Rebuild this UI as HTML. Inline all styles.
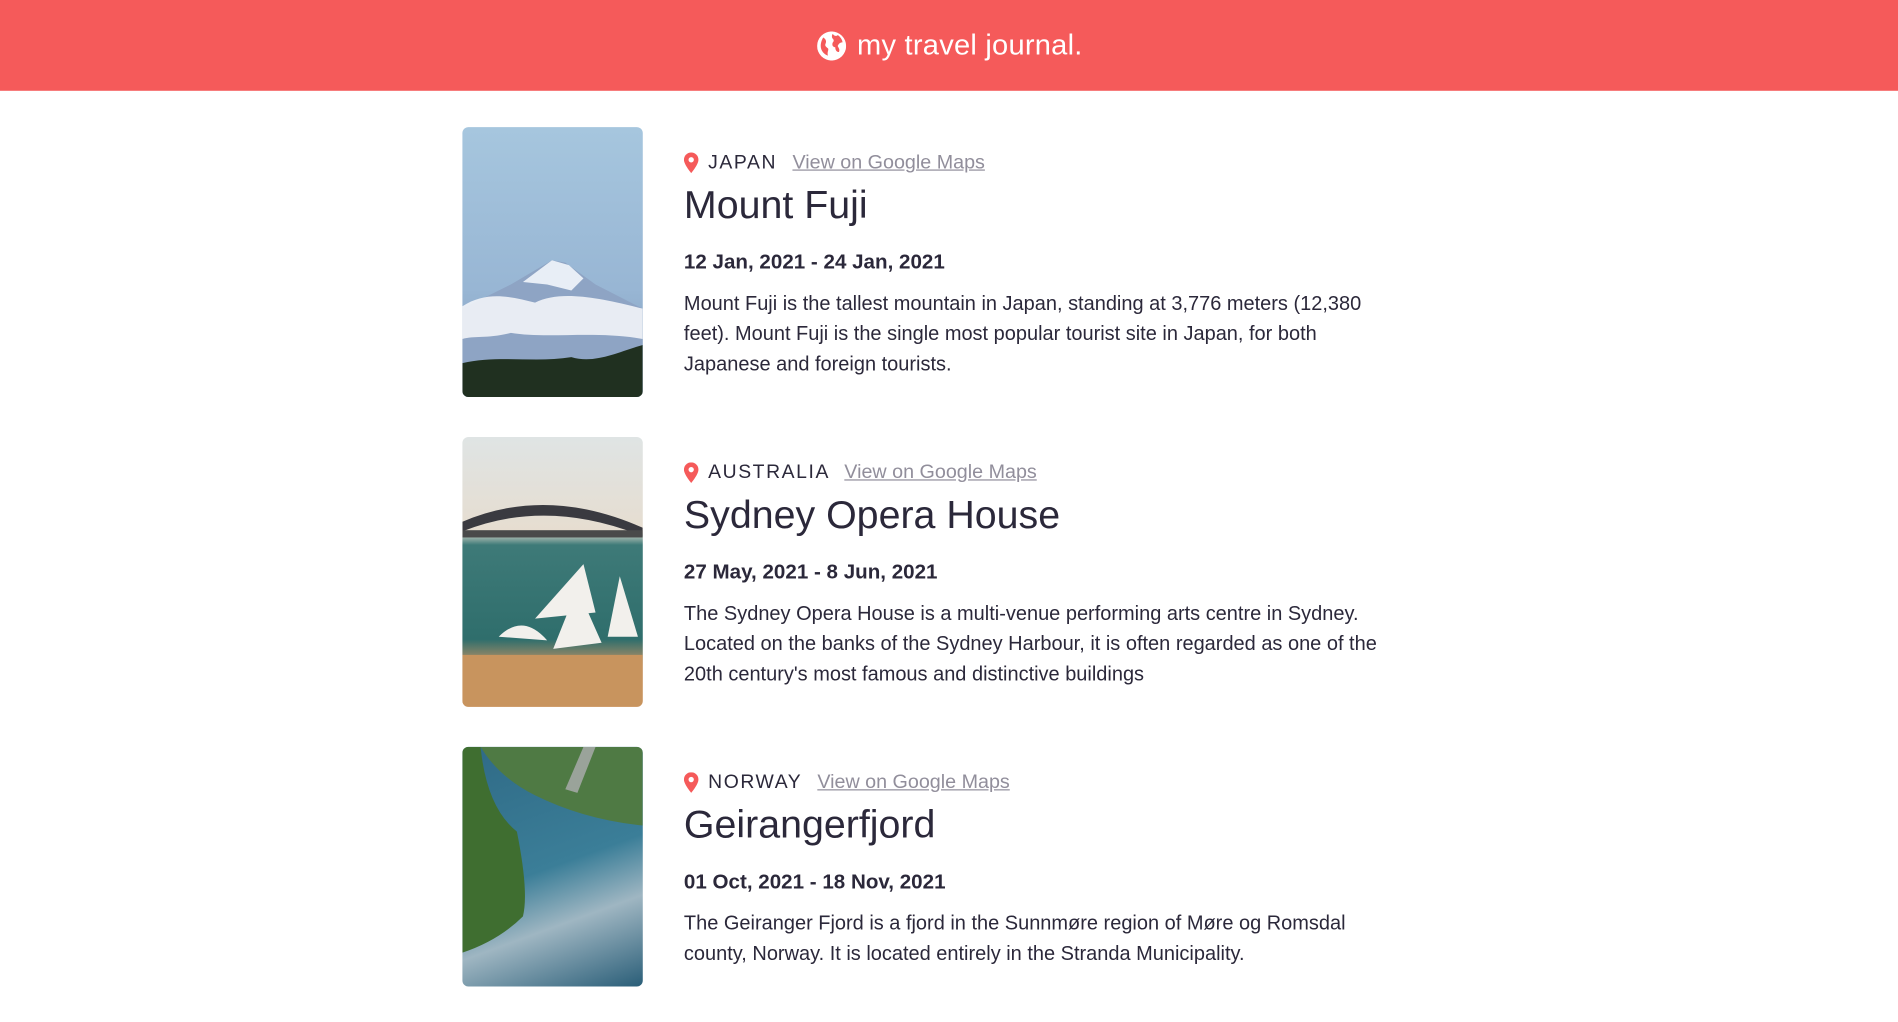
<!DOCTYPE html>
<html><head><meta charset="utf-8"><style>
html,body{margin:0;padding:0;background:#fff;overflow:hidden}
body{width:1898px;height:1022px}
#w{width:1568px;height:845px;transform:scale(1.2105);transform-origin:0 0;position:relative;font-family:"Liberation Sans",sans-serif;color:#2B283A}
header{position:absolute;left:0;top:0;width:1568px;height:75px;background:#F55A5A}
header .t{position:absolute;left:708px;top:24px;font-size:24px;color:#fff;font-weight:500;letter-spacing:0.2px}
header svg{position:absolute;left:675px;top:26px}
.card{position:absolute;left:382px;width:800px}
.img{position:absolute;left:0;top:0;width:149px;border-radius:5px;overflow:hidden}
.c{position:absolute;left:183px;top:0;width:620px}
.pin{position:absolute;left:0;top:21px}
.loc{position:absolute;left:20px;top:20px;font-size:16px;letter-spacing:1.3px;white-space:nowrap}
.loc a{color:#918E9B;text-decoration:underline;letter-spacing:0;margin-left:7px;font-size:16.3px}
h2{position:absolute;left:0;top:46px;margin:0;font-size:32.5px;font-weight:500;white-space:nowrap}
.d{position:absolute;left:0;top:102px;font-size:17px;font-weight:bold;white-space:nowrap}
p{position:absolute;left:0;top:134px;margin:0;font-size:16.5px;line-height:25px;width:597px}
</style></head><body><div id="w">
<header>
<svg width="24" height="24" viewBox="0 0 24 24"><circle cx="12" cy="12" r="12" fill="#fff"/><path d="M5 5c2 1 3 3 2 5s1 3 2 4-1 3 0 6c-3-1-6-4-6-8 0-3 1-5 2-7zM13 2c1 2 3 2 4 1 2 1 4 4 4 6-2 0-3 1-4 3 1 2 2 3 1 5-2 0-3-2-3-4-2 0-3-2-2-4 1-1 1-2 0-3-1-1-1-3 0-4z" fill="#F55A5A"/></svg>
<div class="t">my travel journal.</div>
</header>

<div class="card" style="top:105px">
<div class="img" style="height:223px;background:linear-gradient(#a6c6de,#98b6d4 60%,#7f98b8)">
<svg width="149" height="223" viewBox="0 0 149 223"><path d="M0 150 L40 130 L74 110 L85 112 L110 130 L149 150 V223 H0Z" fill="#8ea4c4"/><path d="M50 128 L74 110 L88 114 L100 125 L90 135 L70 130Z" fill="#e8eef6"/><path d="M0 148 C20 135 40 140 60 145 C80 135 110 140 149 150 V175 C110 168 70 175 40 170 C20 175 10 172 0 175Z" fill="#f2f4f8" opacity=".9"/><path d="M0 195 C30 188 60 195 90 190 C110 196 130 185 149 180 V223 H0Z" fill="#203020"/></svg>
</div>
<div class="c">
<svg class="pin" width="12" height="17" viewBox="0 0 12 17"><path d="M6 0C2.7 0 0 2.6 0 6c0 4 6 11 6 11s6-7 6-11c0-3.4-2.7-6-6-6z" fill="#F55A5A"/><circle cx="6" cy="6" r="2.2" fill="#fff"/></svg>
<div class="loc">JAPAN <a>View on Google Maps</a></div>
<h2>Mount Fuji</h2>
<div class="d">12 Jan, 2021 - 24 Jan, 2021</div>
<p>Mount Fuji is the tallest mountain in Japan, standing at 3,776 meters (12,380 feet). Mount Fuji is the single most popular tourist site in Japan, for both Japanese and foreign tourists.</p>
</div></div>

<div class="card" style="top:361px">
<div class="img" style="height:223px;background:linear-gradient(#dfe4e4,#e6ddd0 35%,#3e7a78 40%,#2f6e6c 75%,#c89464 85%,#d8a070)">
<svg width="149" height="223" viewBox="0 0 149 223"><path d="M0 70 Q70 40 149 75 V82 Q70 50 0 78Z" fill="#3a3a40"/><rect x="0" y="77" width="149" height="6" fill="#4a4a4a"/><path d="M60 150 L100 105 L110 145Z M30 165 Q50 145 70 168Z M120 165 L130 115 L145 165Z M75 175 L95 125 L115 170Z" fill="#f2f0ec"/><path d="M0 180 H149 V223 H0Z" fill="#c8945e"/></svg>
</div>
<div class="c">
<svg class="pin" width="12" height="17" viewBox="0 0 12 17"><path d="M6 0C2.7 0 0 2.6 0 6c0 4 6 11 6 11s6-7 6-11c0-3.4-2.7-6-6-6z" fill="#F55A5A"/><circle cx="6" cy="6" r="2.2" fill="#fff"/></svg>
<div class="loc">AUSTRALIA <a>View on Google Maps</a></div>
<h2>Sydney Opera House</h2>
<div class="d">27 May, 2021 - 8 Jun, 2021</div>
<p>The Sydney Opera House is a multi-venue performing arts centre in Sydney. Located on the banks of the Sydney Harbour, it is often regarded as one of the 20th century's most famous and distinctive buildings</p>
</div></div>

<div class="card" style="top:617px">
<div class="img" style="height:198px;background:linear-gradient(160deg,#2f6a86,#3b7e98 50%,#9fb6c2 70%,#2a5e78)">
<svg width="149" height="198" viewBox="0 0 149 198"><path d="M15 0 H149 V65 Q100 60 60 40 Q30 25 15 0Z" fill="#4f7a44"/><path d="M0 0 H15 Q20 50 45 70 Q55 120 50 140 Q30 160 0 170Z" fill="#3f6e30"/><path d="M100 0 L85 35 L95 38 L110 0Z" fill="#9aa39a"/></svg>
</div>
<div class="c">
<svg class="pin" width="12" height="17" viewBox="0 0 12 17"><path d="M6 0C2.7 0 0 2.6 0 6c0 4 6 11 6 11s6-7 6-11c0-3.4-2.7-6-6-6z" fill="#F55A5A"/><circle cx="6" cy="6" r="2.2" fill="#fff"/></svg>
<div class="loc">NORWAY <a>View on Google Maps</a></div>
<h2>Geirangerfjord</h2>
<div class="d">01 Oct, 2021 - 18 Nov, 2021</div>
<p>The Geiranger Fjord is a fjord in the Sunnmøre region of Møre og Romsdal county, Norway. It is located entirely in the Stranda Municipality.</p>
</div></div>
</div></body></html>
